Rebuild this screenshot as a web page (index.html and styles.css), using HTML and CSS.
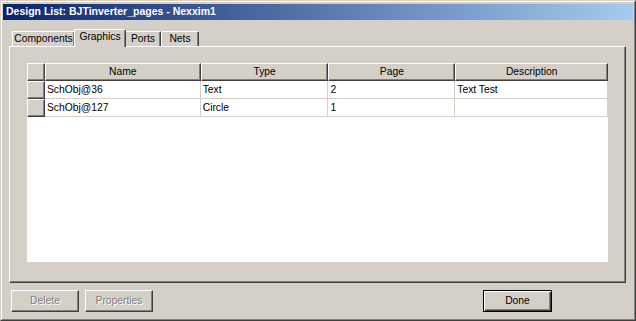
FILE: index.html
```html
<!DOCTYPE html>
<html>
<head>
<meta charset="utf-8">
<link rel="stylesheet" href="styles.css">
</head>
<body>
<div class="win">
  <div class="win-in">
    <div class="title">Design List: BJTinverter_pages - Nexxim1</div>
    <div class="body">
      <div class="tabs">
        <div class="tab t-comp">Components</div>
        <div class="tab sel t-gfx">Graphics</div>
        <div class="tab t-ports">Ports</div>
        <div class="tab t-nets">Nets</div>
      </div>
      <div class="panel">
        <div class="grid">
          <div class="row head">
            <div class="rh"></div>
            <div class="hc c-name">Name</div>
            <div class="hc c-type">Type</div>
            <div class="hc c-page">Page</div>
            <div class="hc c-desc">Description</div>
          </div>
          <div class="row">
            <div class="rh"></div>
            <div class="dc c-name">SchObj@36</div>
            <div class="dc c-type">Text</div>
            <div class="dc c-page">2</div>
            <div class="dc c-desc">Text Test</div>
          </div>
          <div class="row">
            <div class="rh"></div>
            <div class="dc c-name">SchObj@127</div>
            <div class="dc c-type">Circle</div>
            <div class="dc c-page">1</div>
            <div class="dc c-desc"></div>
          </div>
        </div>
      </div>
      <div class="buttons">
        <div class="btn dis">Delete</div>
        <div class="btn dis b-prop">Properties</div>
        <div class="spacer"></div>
        <div class="btn def">Done</div>
      </div>
    </div>
  </div>
</div>
</body>
</html>
```
FILE: styles.css
```css
* { box-sizing: border-box; }
html, body { margin: 0; padding: 0; background: #D4D0C8; }
body { font-family: "Liberation Sans", Arial, sans-serif; font-size: 10.3px; color: #000; }
.win {
  width: 636px; height: 321px;
  border: 1px solid; border-color: #D4D0C8 #404040 #404040 #D4D0C8;
  background: #D4D0C8;
}
.win-in {
  height: 100%;
  border: 1px solid; border-color: #fff #808080 #808080 #fff;
  padding: 2px 1px 1px 1px;
  display: flex; flex-direction: column;
}
.title {
  height: 16px;
  background: linear-gradient(to right, #0A246A, #A6CAF0);
  color: #fff; font-weight: bold; font-size: 10.5px;
  padding-left: 3px; line-height: 15px;
  white-space: nowrap;
}
.body {
  flex: 1; display: flex; flex-direction: column;
  padding: 9px 7px 0 6px;
}
.tabs { display: flex; height: 17px; padding-left: 3px; align-items: flex-end; position: relative; z-index: 2; }
.tab {
  height: 15px;
  border: 1px solid; border-color: #fff #404040 transparent #fff;
  border-bottom: none;
  box-shadow: inset -1px 0 0 #808080;
  border-radius: 2px 2px 0 0;
  text-align: center; line-height: 14px;
  background: #D4D0C8;
}
.t-comp { width: 63px; }
.t-ports { width: 36px; }
.t-nets { width: 38px; }
.tab.sel {
  height: 18px; margin: 0 -1px 0 -1px; width: 52px;
  line-height: 14px; padding-bottom: 3px;
  position: relative; top: 1px;
}
.panel {
  height: 237px;
  border: 1px solid; border-color: #fff #404040 #404040 #fff;
  box-shadow: inset -1px -1px 0 #808080;
  padding: 16px 17px 20px 17px;
}
.grid { height: 100%; background: #fff; }
.row { display: flex; height: 18px; }
.rh {
  width: 18px; height: 18px; background: #D4D0C8;
  border: 1px solid; border-color: #fff #404040 #404040 #fff;
  box-shadow: inset -1px -1px 0 #808080;
}
.hc {
  height: 18px; background: #D4D0C8;
  border: 1px solid; border-color: #fff #404040 #404040 #fff;
  box-shadow: inset -1px -1px 0 #808080;
  text-align: center; line-height: 16px;
}
.dc {
  height: 18px; background: #fff;
  border-right: 1px solid #D4D0C8; border-bottom: 1px solid #D4D0C8;
  padding-left: 2px; line-height: 17px; white-space: nowrap;
}
.c-name { width: 156px; }
.c-type { width: 128px; }
.c-page { width: 127px; }
.c-desc { width: 153px; }
.buttons { display: flex; padding-top: 7px; padding-left: 2px; padding-right: 74px; }
.btn {
  width: 68px; height: 22px;
  border: 1px solid; border-color: #fff #404040 #404040 #fff;
  box-shadow: inset -1px -1px 0 #808080;
  text-align: center; line-height: 20px;
}
.b-prop { margin-left: 6px; }
.spacer { flex: 1; }
.btn.dis { color: #808080; text-shadow: 1px 1px 0 #fff; }
.btn.def {
  width: 69px;
  border: 1px solid #000;
  box-shadow: inset 1px 1px 0 #fff, inset -1px -1px 0 #404040, inset -2px -2px 0 #808080;
}
```
